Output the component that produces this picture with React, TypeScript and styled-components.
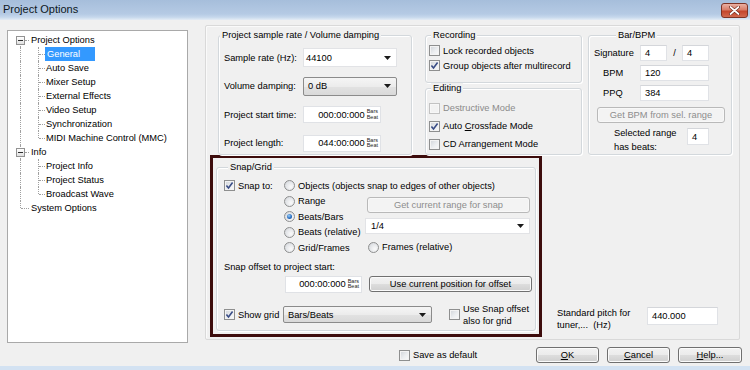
import React from "react";
import styled, { createGlobalStyle } from "styled-components";

const GlobalStyle = createGlobalStyle`
  html, body { margin: 0; padding: 0; background: #f0f0f0; }
  body { font-family: "Liberation Sans", Arial, sans-serif; font-size: 9.3px; color: #000; }
  *, *::before, *::after { box-sizing: border-box; }
`;

const Window = styled.div`
  width: 750px;
  height: 370px;
  display: flex;
  flex-direction: column;
  overflow: hidden;
  background: #f0f0f0;
`;

const TitleBar = styled.div`
  flex: none;
  height: 20px;
  display: flex;
  align-items: flex-start;
  justify-content: space-between;
  padding: 3px 2px 0 3px;
  background: linear-gradient(to bottom, #a6bedb 0%, #b5cae4 70%, #c6d8ec 86%, #e4ecf5 100%);
`;

const TitleText = styled.span`
  font-size: 11px;
  line-height: 13px;
  color: #0d1722;
`;

const CloseButton = styled.div`
  width: 27px;
  height: 15px;
  border: 1px solid #7e3325;
  border-radius: 3px;
  background: linear-gradient(to bottom, #eab0a3 0%, #d87d68 45%, #c4462c 55%, #d2694f 100%);
  display: flex;
  align-items: center;
  justify-content: center;
`;

const Content = styled.div`
  flex: 1;
  display: flex;
  flex-direction: column;
  padding-top: 5px;
`;

const MainRow = styled.div`
  flex: none;
  height: 320px;
  display: flex;
  align-items: flex-start;
`;

/* ---------- Tree ---------- */

const TreeBox = styled.div`
  margin: 5px 0 0 7px;
  width: 181px;
  height: 313px;
  background: #fff;
  border: 1px solid #a9a9a9;
  padding: 2px 0 0 4px;
`;

const TreeRow = styled.div`
  display: flex;
  align-items: center;
  height: 14px;
  white-space: nowrap;
`;

type GuideV = "full" | "top" | "bottom" | "none";

const GuideCell = styled.span<{ $w: number; $vx: number; $v: GuideV; $h: boolean; $hFrom?: number }>`
  position: relative;
  flex: none;
  width: ${(p) => p.$w}px;
  height: 14px;
  display: flex;
  align-items: center;
  justify-content: center;
  &::before {
    content: "";
    display: ${(p) => (p.$v === "none" ? "none" : "block")};
    position: absolute;
    left: ${(p) => p.$vx}px;
    top: ${(p) => (p.$v === "bottom" ? 7 : 0)}px;
    height: ${(p) => (p.$v === "full" ? 14 : 7)}px;
    border-left: 1px dotted #a0a0a0;
  }
  &::after {
    content: "";
    display: ${(p) => (p.$h ? "block" : "none")};
    position: absolute;
    left: ${(p) => (p.$hFrom !== undefined ? p.$hFrom : p.$vx + 1)}px;
    right: 0;
    top: 7px;
    border-top: 1px dotted #a0a0a0;
  }
`;

const Expander = styled.span`
  position: relative;
  z-index: 1;
  width: 9px;
  height: 9px;
  border: 1px solid #929292;
  background: linear-gradient(#ffffff, #e0e0e0);
  display: flex;
  align-items: center;
  justify-content: center;
  &::after {
    content: "";
    width: 5px;
    height: 1px;
    background: #2d2d2d;
  }
`;

const TreeLabel = styled.span<{ $selected?: boolean; $root?: boolean }>`
  margin-left: ${(p) => (p.$root ? 1 : 0)}px;
  padding: 0 ${(p) => (p.$selected ? 15 : 1)}px 0 ${(p) => (p.$selected ? 2 : 1)}px;
  line-height: 14px;
  height: 14px;
  background: ${(p) => (p.$selected ? "#3399ff" : "transparent")};
  color: ${(p) => (p.$selected ? "#fff" : "#000")};
`;

type TreeItem = { label: string; level: 0 | 1; rootV: GuideV; childV?: GuideV; expander?: boolean; selected?: boolean };

const treeItems: TreeItem[] = [
  { label: "Project Options", level: 0, rootV: "bottom", expander: true },
  { label: "General", level: 1, rootV: "full", childV: "full", selected: true },
  { label: "Auto Save", level: 1, rootV: "full", childV: "full" },
  { label: "Mixer Setup", level: 1, rootV: "full", childV: "full" },
  { label: "External Effects", level: 1, rootV: "full", childV: "full" },
  { label: "Video Setup", level: 1, rootV: "full", childV: "full" },
  { label: "Synchronization", level: 1, rootV: "full", childV: "full" },
  { label: "MIDI Machine Control (MMC)", level: 1, rootV: "full", childV: "top" },
  { label: "Info", level: 0, rootV: "full", expander: true },
  { label: "Project Info", level: 1, rootV: "full", childV: "full" },
  { label: "Project Status", level: 1, rootV: "full", childV: "full" },
  { label: "Broadcast Wave", level: 1, rootV: "full", childV: "top" },
  { label: "System Options", level: 0, rootV: "top" },
];

/* ---------- Right panel ---------- */

const Panel = styled.div`
  flex: none;
  margin-left: 17px;
  width: 535px;
  height: 315px;
  border: 1px solid #d9d9d9;
  border-radius: 2px;
  box-shadow: inset 1px 1px 0 #fafafa;
  padding-top: 9px;
  display: flex;
  flex-direction: column;
`;

const TopRow = styled.div`
  flex: none;
  display: flex;
  height: 120px;
  padding-left: 12px;
`;

const BottomRow = styled.div`
  flex: none;
  display: flex;
  align-items: flex-end;
  padding-left: 4px;
`;

const Group = styled.div<{ $w: number; $h?: number }>`
  position: relative;
  flex: none;
  width: ${(p) => p.$w}px;
  height: ${(p) => (p.$h ? `${p.$h}px` : "auto")};
  border: 1px solid #d3d8dc;
  border-radius: 3px;
  box-shadow: inset 1px 1px 0 #ffffff, 1px 1px 0 #ffffff;
`;

const Legend = styled.span<{ $left: number }>`
  position: absolute;
  top: -6px;
  left: ${(p) => p.$left}px;
  padding: 0 2px;
  line-height: 11px;
  background: #f0f0f0;
  white-space: nowrap;
`;

const SampleGroup = styled(Group)`
  padding: 12px 0 0 5px;
  display: grid;
  grid-template-columns: 79px 95px;
  grid-auto-rows: 19px;
  row-gap: 9.5px;
  align-items: center;
`;

const FieldLabel = styled.span`
  white-space: nowrap;
`;

const RecColumn = styled.div`
  flex: none;
  margin-left: 13px;
  display: flex;
  flex-direction: column;
  gap: 5px;
`;

const CheckGroup = styled(Group)<{ $pt: number }>`
  padding: ${(p) => p.$pt}px 0 0 3px;
`;

const CheckRow = styled.div<{ $h: number }>`
  display: flex;
  align-items: center;
  height: ${(p) => p.$h}px;
  gap: 3px;
  white-space: nowrap;
`;

const CheckText = styled.span<{ $disabled?: boolean; $w?: number }>`
  color: ${(p) => (p.$disabled ? "#8b8b8b" : "#000")};
  width: ${(p) => (p.$w ? `${p.$w}px` : "auto")};
  flex: none;
`;

const CheckSquare = styled.span<{ $disabled?: boolean }>`
  flex: none;
  width: 11px;
  height: 11px;
  border: 1px solid ${(p) => (p.$disabled ? "#c2c2c2" : "#8e8f8f")};
  background: ${(p) =>
    p.$disabled ? "#f2f2f2" : "linear-gradient(135deg, #cfd3d8 0%, #eceef0 55%, #fafafa 100%)"};
  box-shadow: inset 0 0 0 1px ${(p) => (p.$disabled ? "#f7f7f7" : "#f3f3f3")};
  display: flex;
  align-items: center;
  justify-content: center;
`;

const RadioCircle = styled.span<{ $on?: boolean }>`
  flex: none;
  width: 11px;
  height: 11px;
  border-radius: 50%;
  border: 1px solid #8e8f8f;
  background: radial-gradient(circle at 65% 65%, #fafafa 0%, #e4e6e9 55%, #cdd0d4 100%);
  display: flex;
  align-items: center;
  justify-content: center;
  &::after {
    content: "";
    display: ${(p) => (p.$on ? "block" : "none")};
    width: 5px;
    height: 5px;
    border-radius: 50%;
    background: radial-gradient(circle at 40% 35%, #9fd0f7 0%, #2a70c4 55%, #163f80 100%);
  }
`;

const BpmGroup = styled(Group)`
  margin-left: 6px;
  padding: 9px 0 0 5px;
  display: flex;
  flex-direction: column;
`;

const BpmRow = styled.div<{ $mt: number; $h: number; $align?: string }>`
  display: flex;
  align-items: ${(p) => p.$align || "center"};
  margin-top: ${(p) => p.$mt}px;
  height: ${(p) => p.$h}px;
  white-space: nowrap;
`;

const BpmLabel = styled.span<{ $w: number; $pl: number }>`
  flex: none;
  width: ${(p) => p.$w}px;
  padding-left: ${(p) => p.$pl}px;
`;

const RangeLabel = styled.span`
  flex: none;
  width: 93px;
  padding-left: 20px;
  margin-top: -1px;
  line-height: 13.5px;
  white-space: normal;
`;

const Slash = styled.span`
  flex: none;
  width: 15px;
  text-align: center;
`;

const TextBox = styled.div<{ $w: number; $h?: number }>`
  flex: none;
  width: ${(p) => p.$w}px;
  height: ${(p) => p.$h || 16}px;
  background: #fff;
  border: 1px solid #e0e2e6;
  border-top-color: #d4d6da;
  padding-left: 4px;
  display: flex;
  align-items: center;
`;

const TimeBox = styled.div<{ $w: number }>`
  flex: none;
  width: ${(p) => p.$w}px;
  height: 17px;
  background: #fff;
  border: 1px solid #e0e2e6;
  display: flex;
  align-items: center;
  justify-content: flex-end;
  padding-right: 2px;
  gap: 2px;
`;

const BarsBeat = styled.span`
  display: flex;
  flex-direction: column;
  font-size: 5.5px;
  line-height: 5.5px;
  color: #222;
`;

const Combo = styled.div<{ $w: number; $h: number; $framed?: boolean; $pl: number }>`
  flex: none;
  width: ${(p) => p.$w}px;
  height: ${(p) => p.$h}px;
  display: flex;
  align-items: center;
  justify-content: space-between;
  padding: 0 5px 0 ${(p) => p.$pl}px;
  border: 1px solid ${(p) => (p.$framed ? "#8b8b8b" : "#e2e3e6")};
  border-radius: ${(p) => (p.$framed ? 2 : 0)}px;
  background: ${(p) =>
    p.$framed ? "linear-gradient(#f5f5f5 0%, #ececec 50%, #e2e2e2 51%, #d9d9d9 100%)" : "#fff"};
`;

const PushButton = styled.div<{ $w: number; $h?: number; $disabled?: boolean; $ml?: number }>`
  flex: none;
  width: ${(p) => p.$w}px;
  height: ${(p) => p.$h || 16}px;
  margin-left: ${(p) => p.$ml || 0}px;
  border: 1px solid ${(p) => (p.$disabled ? "#b9b9b9" : "#707070")};
  border-radius: 3px;
  background: ${(p) =>
    p.$disabled ? "#f3f3f3" : "linear-gradient(#f2f2f2 0%, #ebebeb 50%, #dddddd 51%, #cfcfcf 100%)"};
  color: ${(p) => (p.$disabled ? "#8d8d8d" : "#000")};
  box-shadow: inset 0 0 0 1px ${(p) => (p.$disabled ? "#f8f8f8" : "#fbfbfb")};
  display: flex;
  align-items: center;
  justify-content: center;
  white-space: nowrap;
`;

/* ---------- Snap/Grid ---------- */

const DarkFrame = styled.div`
  flex: none;
  width: 332px;
  height: 182px;
  border: 3px solid #3d0c0c;
  padding: 9px 3px 3px 3px;
  display: flex;
`;

const SnapGroup = styled(Group)`
  flex: 1;
  padding: 10px 0 0 7px;
  display: flex;
  flex-direction: column;
`;

const SnapTop = styled.div`
  display: flex;
`;

const SnapToCol = styled.div`
  flex: none;
  width: 60px;
`;

const RadioCol = styled.div`
  flex: none;
  width: 81px;
  display: flex;
  flex-direction: column;
`;

const RadioRow = styled.div<{ $pl?: number }>`
  display: flex;
  align-items: center;
  gap: 3px;
  height: 15.5px;
  padding-left: ${(p) => p.$pl || 0}px;
  white-space: nowrap;
`;

const SnapRightCol = styled.div`
  flex: none;
  padding-top: 19px;
  display: flex;
  flex-direction: column;
`;

const OffsetLabel = styled.div`
  margin-top: 4.5px;
  height: 14px;
  line-height: 14px;
`;

const OffsetRow = styled.div`
  margin-top: 2px;
  height: 16px;
  display: flex;
  align-items: center;
  padding-left: 61px;
`;

const GridRow = styled.div`
  margin-top: 14px;
  height: 17px;
  display: flex;
  align-items: center;
`;

const TwoLine = styled.span`
  line-height: 12px;
  white-space: pre;
`;

const PitchArea = styled.div`
  flex: none;
  margin: 0 0 6px 15px;
  display: flex;
  align-items: flex-start;
`;

const PitchLabel = styled.span`
  flex: none;
  width: 90px;
  line-height: 12px;
  white-space: pre;
`;

/* ---------- Footer ---------- */

const Footer = styled.div`
  flex: none;
  margin-top: 2px;
  height: 16px;
  display: flex;
  align-items: center;
  padding: 0 8px 0 399px;
`;

const FooterButtons = styled.div`
  margin-left: auto;
  display: flex;
  gap: 8px;
`;

const BottomEdge = styled.div`
  flex: none;
  height: 4px;
  background: #d3e2f2;
`;

/* ---------- small pieces ---------- */

const Arrow = () => (
  <svg width="7" height="4" viewBox="0 0 7 4">
    <path d="M0 0 L7 0 L3.5 4 Z" fill="#1a1a1a" />
  </svg>
);

const Check = ({ checked, disabled }: { checked?: boolean; disabled?: boolean }) => (
  <CheckSquare $disabled={disabled}>
    {checked && (
      <svg width="9" height="9" viewBox="0 0 9 9">
        <path d="M1.4 4.4 L3.5 6.9 L7.6 1.5" fill="none" stroke="#3a4d86" strokeWidth="1.6" />
      </svg>
    )}
  </CheckSquare>
);

const Time = ({ value, w }: { value: string; w: number }) => (
  <TimeBox $w={w}>
    <span>{value}</span>
    <BarsBeat>
      <span>Bars</span>
      <span>Beat</span>
    </BarsBeat>
  </TimeBox>
);

export default function App() {
  return (
    <>
      <GlobalStyle />
      <Window>
        <TitleBar>
          <TitleText>Project Options</TitleText>
          <CloseButton>
            <svg width="11" height="9" viewBox="0 0 11 9">
              <path d="M1.5 1 L9.5 8 M9.5 1 L1.5 8" stroke="#6b2417" strokeWidth="3" strokeLinecap="round" />
              <path d="M1.5 1 L9.5 8 M9.5 1 L1.5 8" stroke="#ffffff" strokeWidth="1.7" strokeLinecap="round" />
            </svg>
          </CloseButton>
        </TitleBar>
        <Content>
          <MainRow>
            <TreeBox>
              {treeItems.map((it) => (
                <TreeRow key={it.label}>
                  {it.level === 0 ? (
                    <>
                      <GuideCell $w={17} $vx={8} $v={it.rootV} $h $hFrom={it.expander ? 13 : undefined}>
                        {it.expander && <Expander />}
                      </GuideCell>
                      <TreeLabel $root>{it.label}</TreeLabel>
                    </>
                  ) : (
                    <>
                      <GuideCell $w={17} $vx={8} $v={it.rootV} $h={false} />
                      <GuideCell $w={16} $vx={9} $v={it.childV || "full"} $h />
                      <TreeLabel $selected={it.selected}>{it.label}</TreeLabel>
                    </>
                  )}
                </TreeRow>
              ))}
            </TreeBox>

            <Panel>
              <TopRow>
                <SampleGroup $w={194} $h={120}>
                  <Legend $left={1}>Project sample rate / Volume damping</Legend>
                  <FieldLabel>Sample rate (Hz):</FieldLabel>
                  <Combo $w={94} $h={19} $pl={2}>
                    <span>44100</span>
                    <Arrow />
                  </Combo>
                  <FieldLabel>Volume damping:</FieldLabel>
                  <Combo $w={94} $h={19} $pl={4} $framed>
                    <span>0 dB</span>
                    <Arrow />
                  </Combo>
                  <FieldLabel>Project start time:</FieldLabel>
                  <Time value="000:00:000" w={78} />
                  <FieldLabel>Project length:</FieldLabel>
                  <Time value="044:00:000" w={78} />
                </SampleGroup>

                <RecColumn>
                  <CheckGroup $w={157} $h={48} $pt={7}>
                    <Legend $left={5}>Recording</Legend>
                    <CheckRow $h={15}>
                      <Check />
                      <CheckText>Lock recorded objects</CheckText>
                    </CheckRow>
                    <CheckRow $h={15}>
                      <Check checked />
                      <CheckText>Group objects after multirecord</CheckText>
                    </CheckRow>
                  </CheckGroup>
                  <CheckGroup $w={157} $h={67} $pt={10}>
                    <Legend $left={5}>Editing</Legend>
                    <CheckRow $h={18}>
                      <Check disabled />
                      <CheckText $disabled>Destructive Mode</CheckText>
                    </CheckRow>
                    <CheckRow $h={18}>
                      <Check checked />
                      <CheckText>
                        Auto <u>C</u>rossfade Mode
                      </CheckText>
                    </CheckRow>
                    <CheckRow $h={18}>
                      <Check />
                      <CheckText>CD Arrangement Mode</CheckText>
                    </CheckRow>
                  </CheckGroup>
                </RecColumn>

                <BpmGroup $w={144} $h={120}>
                  <Legend $left={27}>Bar/BPM</Legend>
                  <BpmRow $mt={0} $h={16}>
                    <BpmLabel $w={46} $pl={0}>Signature</BpmLabel>
                    <TextBox $w={27}>4</TextBox>
                    <Slash>/</Slash>
                    <TextBox $w={27}>4</TextBox>
                  </BpmRow>
                  <BpmRow $mt={4} $h={16}>
                    <BpmLabel $w={46} $pl={9}>BPM</BpmLabel>
                    <TextBox $w={69}>120</TextBox>
                  </BpmRow>
                  <BpmRow $mt={4} $h={16}>
                    <BpmLabel $w={46} $pl={9}>PPQ</BpmLabel>
                    <TextBox $w={69}>384</TextBox>
                  </BpmRow>
                  <BpmRow $mt={6} $h={16}>
                    <PushButton $w={128} $ml={3} $disabled>
                      Get BPM from sel. range
                    </PushButton>
                  </BpmRow>
                  <BpmRow $mt={5} $h={17} $align="flex-start">
                    <RangeLabel>
                      Selected range
                      <br />
                      has beats:
                    </RangeLabel>
                    <TextBox $w={22} $h={17}>
                      4
                    </TextBox>
                  </BpmRow>
                </BpmGroup>
              </TopRow>

              <BottomRow>
                <DarkFrame>
                  <SnapGroup $w={320}>
                    <Legend $left={11}>Snap/Grid</Legend>
                    <SnapTop>
                      <SnapToCol>
                        <RadioRow>
                          <Check checked />
                          <span>Snap to:</span>
                        </RadioRow>
                      </SnapToCol>
                      <RadioCol>
                        <RadioRow>
                          <RadioCircle />
                          <span>Objects (objects snap to edges of other objects)</span>
                        </RadioRow>
                        <RadioRow>
                          <RadioCircle />
                          <span>Range</span>
                        </RadioRow>
                        <RadioRow>
                          <RadioCircle $on />
                          <span>Beats/Bars</span>
                        </RadioRow>
                        <RadioRow>
                          <RadioCircle />
                          <span>Beats (relative)</span>
                        </RadioRow>
                        <RadioRow>
                          <RadioCircle />
                          <span>Grid/Frames</span>
                        </RadioRow>
                      </RadioCol>
                      <SnapRightCol>
                        <PushButton $w={163} $ml={2} $disabled>
                          Get current range for snap
                        </PushButton>
                        <Combo $w={165} $h={16} $pl={5} style={{ marginTop: 5 }}>
                          <span>1/4</span>
                          <Arrow />
                        </Combo>
                        <RadioRow $pl={3} style={{ marginTop: 5.5 }}>
                          <RadioCircle />
                          <span>Frames (relative)</span>
                        </RadioRow>
                      </SnapRightCol>
                    </SnapTop>
                    <OffsetLabel>Snap offset to project start:</OffsetLabel>
                    <OffsetRow>
                      <Time value="000:00:000" w={77} />
                      <PushButton $w={163} $ml={7}>
                        Use current position for offset
                      </PushButton>
                    </OffsetRow>
                    <GridRow>
                      <CheckRow $h={17}>
                        <Check checked />
                        <CheckText $w={45}>Show grid</CheckText>
                      </CheckRow>
                      <Combo $w={149} $h={17} $pl={4} $framed>
                        <span>Bars/Beats</span>
                        <Arrow />
                      </Combo>
                      <CheckRow $h={17} style={{ marginLeft: 17 }}>
                        <Check />
                        <TwoLine>{"Use Snap offset\nalso for grid"}</TwoLine>
                      </CheckRow>
                    </GridRow>
                  </SnapGroup>
                </DarkFrame>
                <PitchArea>
                  <PitchLabel>{"Standard pitch for\ntuner,...  (Hz)"}</PitchLabel>
                  <TextBox $w={71} $h={18}>
                    440.000
                  </TextBox>
                </PitchArea>
              </BottomRow>
            </Panel>
          </MainRow>

          <Footer>
            <CheckRow $h={16}>
              <Check />
              <span>Save as default</span>
            </CheckRow>
            <FooterButtons>
              <PushButton $w={63}>
                <span>
                  <u>O</u>K
                </span>
              </PushButton>
              <PushButton $w={63}>
                <span>
                  <u>C</u>ancel
                </span>
              </PushButton>
              <PushButton $w={64}>
                <span>
                  <u>H</u>elp...
                </span>
              </PushButton>
            </FooterButtons>
          </Footer>
        </Content>
        <BottomEdge />
      </Window>
    </>
  );
}
